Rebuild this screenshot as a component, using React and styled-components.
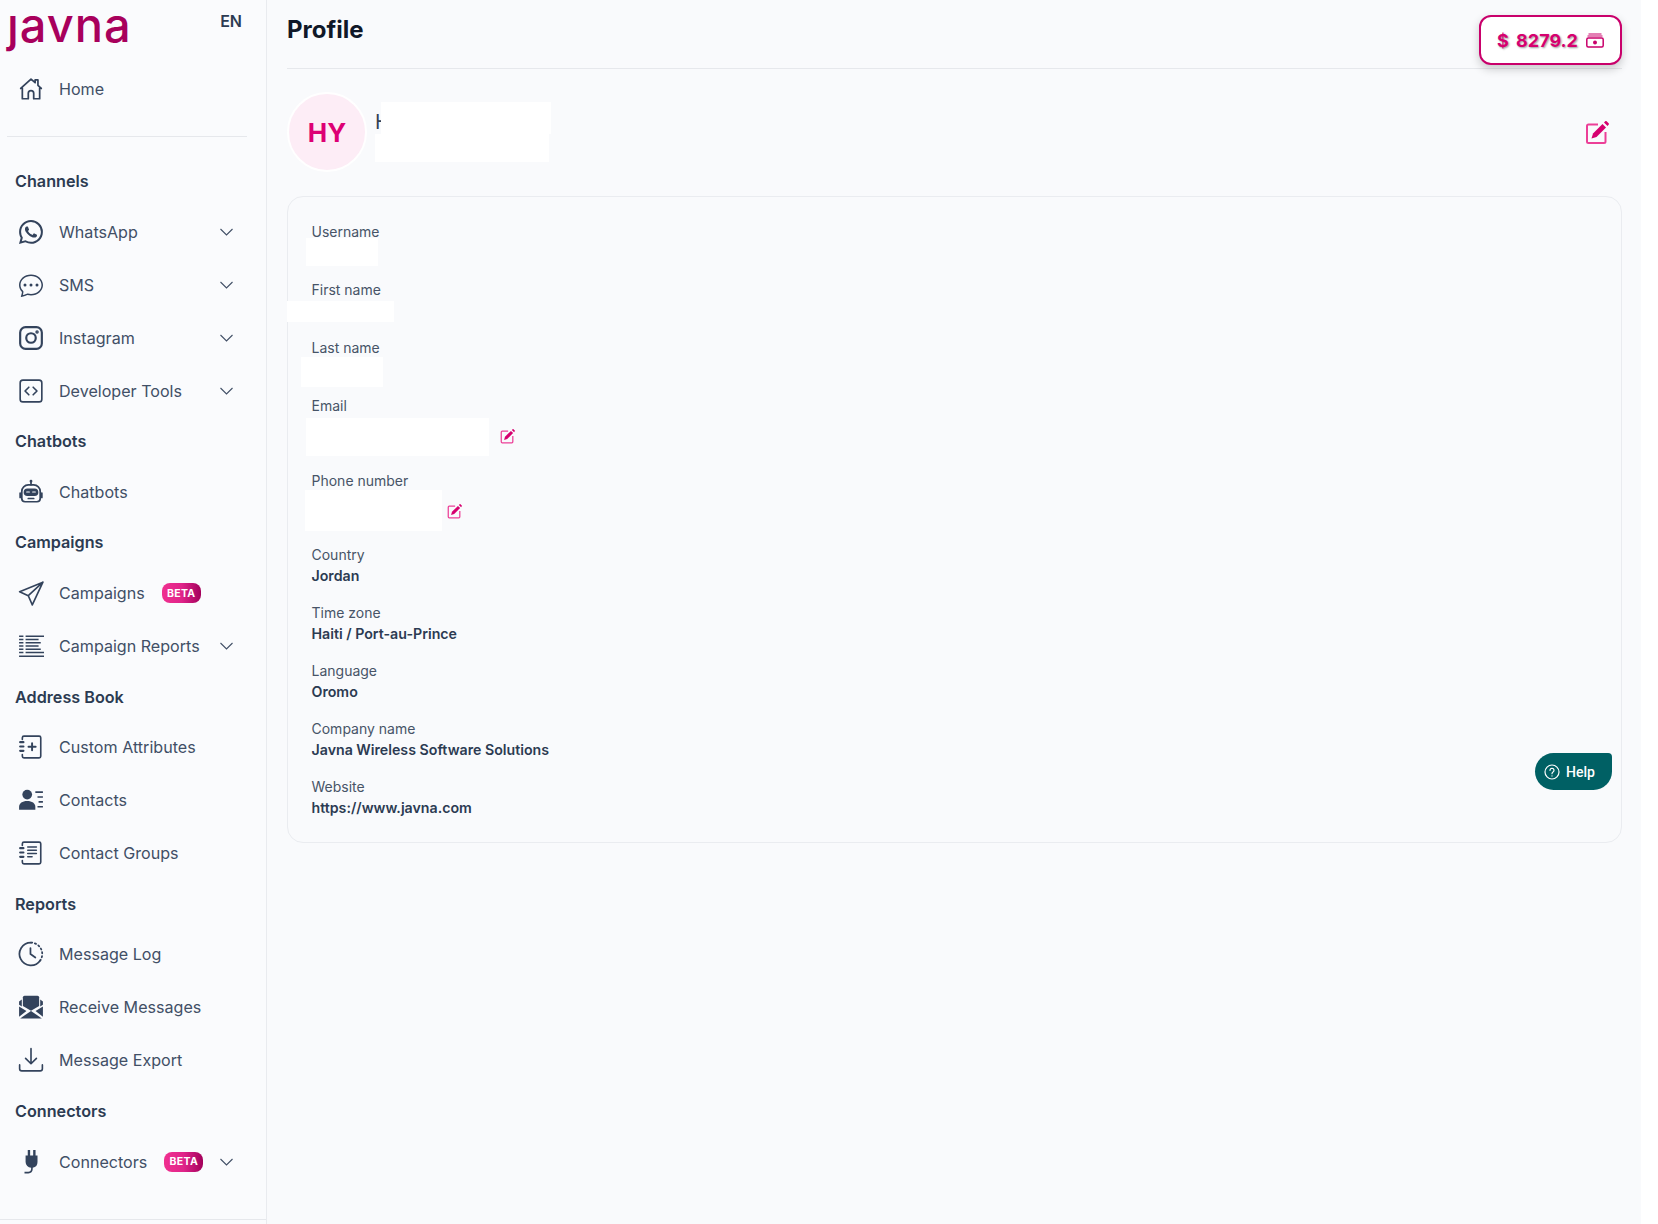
import React from 'react';
import styled, {createGlobalStyle} from 'styled-components';
import {BsWhatsapp, BsChatDots} from 'react-icons/bs';

const GlobalStyle = createGlobalStyle`
  html, body {
    margin: 0;
    padding: 0;
    background: #fff;
  }
  * {
    box-sizing: border-box;
  }
`;

const Svg = ({children, size = 26, fill = 'none', sw = 1.6}) => (
	<svg width={size} height={size} viewBox="0 0 24 24" fill={fill} stroke={fill === 'none' ? 'currentColor' : 'none'} strokeWidth={sw} strokeLinecap="round" strokeLinejoin="round">
		{children}
	</svg>
);

const HomeIcon = () => (
	<Svg><path d="M2.5 11.5 12 2.8l3.8 3.4V3.6h2.6v5L21.5 11.5M4 10v11h5.5v-5a2.5 2.5 0 0 1 5 0v5H20V10"/></Svg>
);
const InstagramIcon = () => (
	<Svg sw={2}><rect x="2" y="2" width="20" height="20" rx="5"/><circle cx="12" cy="12" r="4.4"/><circle cx="17.6" cy="6.4" r=".6"/></Svg>
);
const CodeIcon = () => (
	<Svg sw={1.5}><rect x="2" y="2" width="20" height="20" rx="2.5"/><path d="M10 8.5 6.5 12l3.5 3.5M14 8.5l3.5 3.5-3.5 3.5"/></Svg>
);
const RobotIcon = () => (
	<Svg sw={1.6}>
		<path d="M12 2v3.2"/>
		<circle cx="12" cy="2" r=".5"/>
		<path d="M6.500 21h11a3 3 0 0 0 3-3v-6.500a6 6 0 0 0-6-6h-5a6 6 0 0 0-6 6V18a3 3 0 0 0 3 3z"/>
		<rect x="6" y="9.500" width="12" height="5.500" rx="2.700" fill="currentColor"/>
		<path d="M9.500 18h5M2 13v4M22 13v4"/>
		<path d="M8 12h2.500M13.500 12H16" stroke="#fafbfd" strokeWidth="1"/>
	</Svg>
);
const SendIcon = () => (
	<Svg sw={1.5}><path d="M23 2 1.500 10.800l8 3.700 3.700 8.500zM23 2 9.500 14.500"/></Svg>
);
const ReportIcon = () => (
	<Svg sw={1.500}>
		<path d="M1 3h4M1 6h4M1 9h4M1 12h4M1 15h4M1 18h4M1 21.500h23M7 3h17M7 6h12M7 9h14M7 12h12M7 15h14M7 18h17" strokeLinecap="butt"/>
	</Svg>
);
const NotebookPlusIcon = () => (
	<Svg sw={1.500}>
		<path d="M4 5V3.500A1.500 1.500 0 0 1 5.500 2h14A1.500 1.500 0 0 1 21 3.500v17a1.500 1.500 0 0 1-1.500 1.500h-14A1.500 1.500 0 0 1 4 20.500V19"/>
		<path d="M2 7.500h3M2 11.500h3M2 15.500h3" strokeWidth="2"/>
		<path d="M13 8.500v6.500M9.700 11.800h6.600" strokeWidth="1.800"/>
	</Svg>
);
const ContactsIcon = () => (
	<svg width="26" height="26" viewBox="0 0 24 24" fill="currentColor">
		<circle cx="8.500" cy="7" r="4.500"/>
		<path d="M1 21v-2.500C1 15 4 13 8.500 13s7.500 2 7.500 5.500V21z"/>
		<path d="M16 4h7v1.500h-7zM18 8.500h5V10h-5zM19 13h4v1.500h-4zM18 17.500h5V19h-5z"/>
	</svg>
);
const NotebookListIcon = () => (
	<Svg sw={1.500}>
		<path d="M4 5V3.500A1.500 1.500 0 0 1 5.500 2h14A1.500 1.500 0 0 1 21 3.500v17a1.500 1.500 0 0 1-1.500 1.500h-14A1.500 1.500 0 0 1 4 20.500V19"/>
		<path d="M2 7.500h3M2 11.500h3M2 15.500h3" strokeWidth="2"/>
		<path d="M9 6.500h8M9 9.500h8M9 12.500h8M9 15.500h4" strokeWidth="1.400"/>
	</Svg>
);
const ClockIcon = () => (
	<Svg sw={1.600}>
		<path d="M12 1.500A10.500 10.500 0 1 0 20.500 18"/>
		<path d="M12 1.500A10.500 10.500 0 0 1 20.500 18" strokeDasharray="1.200 2.400"/>
		<path d="M11.500 6.500V12l4.500 3.200"/>
	</Svg>
);
const EnvelopeIcon = () => (
	<svg width="26" height="26" viewBox="0 0 24 24" fill="currentColor">
		<path d="M6 1.500h12A1.500 1.500 0 0 1 19.500 3v8L12 15.500 4.500 11V3A1.500 1.500 0 0 1 6 1.500z"/>
		<path d="M1 7l2.500-2v6.500L1 10zM23 7l-2.500-2v6.500L23 10z"/>
		<path d="M1 11.500l6.800 4.200L1 21zM23 11.500l-6.800 4.200L23 21z"/>
		<path d="M2 22.500 12 15.800l10 6.700z"/>
	</svg>
);
const DownloadIcon = () => (
	<Svg sw={1.500}><path d="M12 1.500v14M7 10.500l5 5 5-5M1.500 16.500V20a2 2 0 0 0 2 2h17a2 2 0 0 0 2-2v-3.500"/></Svg>
);
const PlugIcon = () => (
	<svg width="26" height="26" viewBox="0 0 24 24" fill="currentColor">
		<path d="M9 1h2.200v5H14V1h2.200v5H18v6a5.500 5.500 0 0 1-4.400 5.400v1.100c0 2.500-1.600 4-4 4H6v-1.500h3.500c1.600 0 2.600-1 2.600-2.500v-1.100A5.500 5.500 0 0 1 7 12V6h2z"/>
	</svg>
);
const ChevronIcon = () => (
	<svg width="13" height="8" viewBox="0 0 13 8" fill="none" stroke="currentColor" strokeWidth="1.100">
		<path d="M.5 1 6.500 7l6-6"/>
	</svg>
);
const EditIcon = ({size}) => (
	<svg width={size} height={size} viewBox="0 0 24 24" fill="none">
		<path d="M13 3.500H3.500A1.500 1.500 0 0 0 2 5v15.500A1.500 1.500 0 0 0 3.500 22H19a1.500 1.500 0 0 0 1.500-1.500V11" stroke="#ec3f97" strokeWidth="2"/>
		<path d="M6.500 17.500 8 12.500 17.500 3l3.500 3.500L11.500 16z" fill="#d6006f"/>
		<path d="M19 1.500 20.200.3a1 1 0 0 1 1.400 0l2 2a1 1 0 0 1 0 1.400L22.500 5z" fill="#d6006f"/>
	</svg>
);
const CashIcon = () => (
	<svg width="18" height="15" viewBox="0 0 18 15" fill="none" stroke="#c9006b">
		<path d="M2.500 1h13M1.500 3h15" strokeWidth="1"/>
		<rect x=".8" y="5" width="16.400" height="9" rx="1.500" strokeWidth="1.500"/>
		<circle cx="9" cy="9.500" r="2" fill="#c9006b" strokeWidth="0"/>
	</svg>
);
const HelpIcon = () => (
	<svg width="16" height="16" viewBox="0 0 24 24" fill="none" stroke="#fff" strokeWidth="1.800" strokeLinecap="round">
		<circle cx="12" cy="12" r="10.500"/>
		<path d="M9 9.500a3 3 0 1 1 4.500 2.600c-1 .6-1.500 1.200-1.500 2.400M12 17.800v.1"/>
	</svg>
);

const groups = [
	{title: 'Channels', items: [
		{icon: <BsWhatsapp size={24}/>, label: 'WhatsApp', more: true},
		{icon: <BsChatDots size={24}/>, label: 'SMS', more: true},
		{icon: <InstagramIcon/>, label: 'Instagram', more: true},
		{icon: <CodeIcon/>, label: 'Developer Tools', more: true},
	]},
	{title: 'Chatbots', items: [
		{icon: <RobotIcon/>, label: 'Chatbots'},
	]},
	{title: 'Campaigns', items: [
		{icon: <SendIcon/>, label: 'Campaigns', beta: true},
		{icon: <ReportIcon/>, label: 'Campaign Reports', more: true},
	]},
	{title: 'Address Book', items: [
		{icon: <NotebookPlusIcon/>, label: 'Custom Attributes'},
		{icon: <ContactsIcon/>, label: 'Contacts'},
		{icon: <NotebookListIcon/>, label: 'Contact Groups'},
	]},
	{title: 'Reports', items: [
		{icon: <ClockIcon/>, label: 'Message Log'},
		{icon: <EnvelopeIcon/>, label: 'Receive Messages'},
		{icon: <DownloadIcon/>, label: 'Message Export'},
	]},
	{title: 'Connectors', items: [
		{icon: <PlugIcon/>, label: 'Connectors', beta: true, more: true},
	]},
];

const NavRow = ({icon, label, beta, more}) => (
	<Row>
		<IconSlot>{icon}</IconSlot>
		<span>{label}</span>
		{beta && <Beta>BETA</Beta>}
		{more && <Chevron><ChevronIcon/></Chevron>}
	</Row>
);

const App = () => (
	<Page>
		<GlobalStyle/>
		<Sidebar>
			<Brand>
				<Logo>ȷavna</Logo>
				<Lang>EN</Lang>
			</Brand>
			<NavRow icon={<HomeIcon/>} label="Home"/>
			<Divider/>
			{groups.map(group => (
				<div key={group.title}>
					<GroupTitle>{group.title}</GroupTitle>
					{group.items.map(item => <NavRow key={item.label} {...item}/>)}
				</div>
			))}
			<SideFooter/>
		</Sidebar>
		<Main>
			<Header>
				<Title>Profile</Title>
				<Balance>$ 8279.2<CashIcon/></Balance>
			</Header>
			<ProfileRow>
				<Avatar>HY</Avatar>
				<NameBlock>
					<Name>H</Name>
					<NameMask $w={170} $h={32} $x={6} $y={0}/>
					<NameMask $w={174} $h={28} $x={0} $y={32}/>
				</NameBlock>
				<TopEdit><EditIcon size={24}/></TopEdit>
			</ProfileRow>
			<Card>
				<Field>
					<Label>Username</Label>
					<Value><Blot $w={72} $h={28} $x={-6} $y={-5}/></Value>
				</Field>
				<Field>
					<Label>First name</Label>
					<Value><Blot $w={107} $h={21} $x={-25} $y={0}/></Value>
				</Field>
				<Field>
					<Label>Last name</Label>
					<Value><Blot $w={82} $h={30} $x={-11} $y={-2}/></Value>
				</Field>
				<Field>
					<Label>Email</Label>
					<EditValue $h={38}>
						<Blot $w={183} $h={38} $x={-6} $y={2}/>
						<RowEdit $gap={11}><EditIcon size={15}/></RowEdit>
					</EditValue>
				</Field>
				<Field>
					<Label>Phone number</Label>
					<EditValue $h={37}>
						<Blot $w={137} $h={41} $x={-7} $y={-1}/>
						<RowEdit $gap={5}><EditIcon size={15}/></RowEdit>
					</EditValue>
				</Field>
				<Field>
					<Label>Country</Label>
					<Value>Jordan</Value>
				</Field>
				<Field>
					<Label>Time zone</Label>
					<Value>Haiti / Port-au-Prince</Value>
				</Field>
				<Field>
					<Label>Language</Label>
					<Value>Oromo</Value>
				</Field>
				<Field>
					<Label>Company name</Label>
					<Value>Javna Wireless Software Solutions</Value>
				</Field>
				<Field>
					<Label>Website</Label>
					<Value>https://www.javna.com</Value>
				</Field>
			</Card>
		</Main>
		<HelpButton><HelpIcon/>Help</HelpButton>
	</Page>
);

export default App;

const Page = styled.div`
  width: 1641px;
  height: 1224px;
  display: flex;
  position: relative;
  overflow: hidden;
  background: #f9fafc;
  font-family: Inter, "Liberation Sans", sans-serif;
`;

const Sidebar = styled.aside`
  width: 267px;
  flex-shrink: 0;
  display: flex;
  flex-direction: column;
  background: #fafbfd;
  border-right: 1px solid #e9ebef;
`;

const Brand = styled.div`
  height: 62px;
  flex-shrink: 0;
  display: flex;
  justify-content: space-between;
  padding: 0 24px 0 7px;
`;

const Logo = styled.div`
  font-size: 47px;
  font-weight: 500;
  line-height: 50px;
  height: 56px;
  color: #a8005c;
  letter-spacing: 1px;
`;

const Lang = styled.div`
  font-size: 16px;
  font-weight: 600;
  line-height: 20px;
  margin-top: 11px;
  color: #2c3b52;
`;

const Row = styled.div`
  height: 53px;
  display: flex;
  align-items: center;
  padding: 0 33px 0 18px;
  font-size: 16.100px;
  color: #414f66;
`;

const IconSlot = styled.div`
  width: 26px;
  height: 26px;
  margin-right: 15px;
  display: flex;
  align-items: center;
  justify-content: center;
  color: #33435c;
`;

const Chevron = styled.div`
  margin-left: auto;
  display: flex;
  color: #414f66;
`;

const Beta = styled.div`
  width: 39px;
  height: 20px;
  margin-left: 17px;
  border-radius: 8px;
  display: flex;
  align-items: center;
  justify-content: center;
  font-size: 10.500px;
  font-weight: 700;
  letter-spacing: 0.3px;
  color: #fff;
  background: linear-gradient(90deg, #f0308f 0%, #e0248a 50%, #a3005b 100%);
`;

const Divider = styled.div`
  height: 1px;
  flex-shrink: 0;
  margin: 21px 19px 20px 7px;
  background: #e6e8ec;
`;

const GroupTitle = styled.div`
  height: 48.200px;
  display: flex;
  align-items: center;
  padding-left: 15px;
  font-size: 16.200px;
  font-weight: 600;
  color: #2c3b52;
`;

const SideFooter = styled.div`
  margin-top: auto;
  height: 5px;
  flex-shrink: 0;
  border-top: 1px solid #e6e8ec;
`;

const Main = styled.main`
  flex: 1;
  min-width: 0;
  padding: 0 19px 0 20px;
`;

const Header = styled.header`
  height: 69px;
  display: flex;
  justify-content: space-between;
  align-items: flex-start;
  border-bottom: 1px solid #e6e8ec;
`;

const Title = styled.h1`
  margin: 14px 0 0;
  font-size: 24px;
  line-height: 32px;
  font-weight: 700;
  color: #101828;
`;

const Balance = styled.div`
  width: 143px;
  height: 50px;
  margin-top: 15px;
  display: flex;
  align-items: center;
  justify-content: center;
  gap: 8px;
  background: #fff;
  border: 2px solid #c9006b;
  border-radius: 12px;
  box-shadow: 0 4px 10px rgba(0, 0, 0, 0.2);
  font-size: 18px;
  font-weight: 700;
  white-space: pre;
  word-spacing: 3px;
  color: #d6006f;
  text-shadow: 1px 1px 2px rgba(0, 0, 0, 0.4);
`;

const ProfileRow = styled.div`
  display: flex;
  align-items: flex-start;
  margin: 23px 0 24px;
`;

const Avatar = styled.div`
  width: 80px;
  height: 80px;
  border-radius: 50%;
  border: 2px solid #fff;
  background: #fdedf6;
  display: flex;
  align-items: center;
  justify-content: center;
  font-size: 26px;
  font-weight: 700;
  color: #dd0074;
`;

const NameBlock = styled.div`
  position: relative;
  margin: 10px 0 0 8px;
`;

const Name = styled.div`
  font-size: 20px;
  line-height: 24px;
  margin-top: 8px;
  color: #344054;
`;

const NameMask = styled.div`
  position: absolute;
  left: ${({$x}) => $x}px;
  top: ${({$y}) => $y}px;
  width: ${({$w}) => $w}px;
  height: ${({$h}) => $h}px;
  background: #fff;
`;

const TopEdit = styled.div`
  margin: 29px 13px 0 auto;
  display: flex;
`;

const Card = styled.section`
  height: 647px;
  padding: 25px 23.500px;
  display: flex;
  flex-direction: column;
  gap: 17px;
  border: 1px solid #eaecf0;
  border-radius: 16px;
`;

const Field = styled.div`
  display: flex;
  flex-direction: column;
`;

const Label = styled.div`
  font-size: 14px;
  line-height: 20px;
  color: #475467;
`;

const Value = styled.div`
  height: 21px;
  padding-top: 1px;
  font-size: 14.200px;
  line-height: 20px;
  font-weight: 600;
  color: #2c3b52;
`;

const EditValue = styled.div`
  height: ${({$h}) => $h}px;
  display: flex;
  align-items: flex-start;
`;

const Blot = styled.div`
  width: ${({$w}) => $w}px;
  height: ${({$h}) => $h}px;
  margin-left: ${({$x}) => $x}px;
  margin-top: ${({$y}) => $y}px;
  background: #fff;
`;

const RowEdit = styled.div`
  margin: 13px 0 0 ${({$gap}) => $gap}px;
  display: flex;
`;

const HelpButton = styled.div`
  position: absolute;
  left: 1535px;
  top: 753px;
  width: 77px;
  height: 37px;
  display: flex;
  align-items: center;
  gap: 6px;
  padding-left: 9px;
  background: #006064;
  border-radius: 19px 4px 19px 19px;
  color: #fff;
  font-family: Roboto, Inter, sans-serif;
  font-size: 14px;
  font-weight: 500;
`;
